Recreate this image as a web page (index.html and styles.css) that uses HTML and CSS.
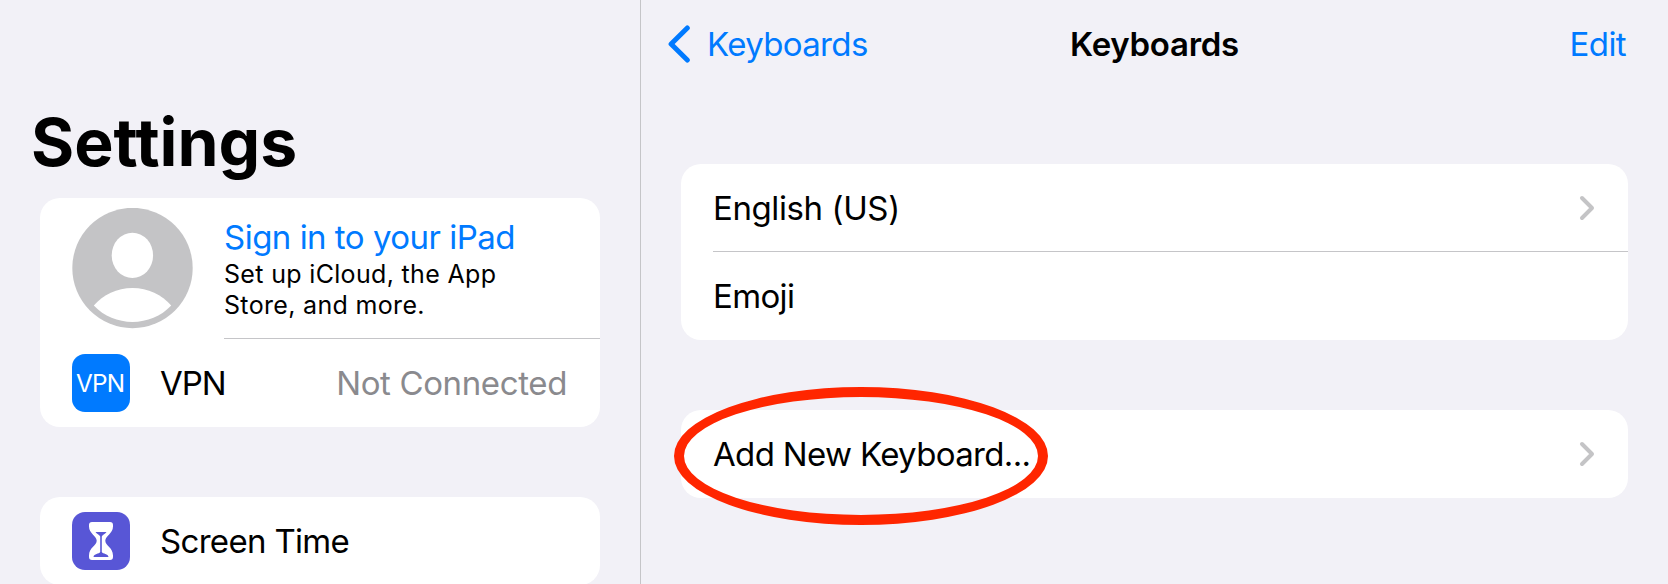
FILE: index.html
```html
<!DOCTYPE html>
<html lang="en">
<head>
<meta charset="utf-8">
<title>Settings – Keyboards</title>
<link rel="stylesheet" href="styles.css">
</head>
<body>
<div class="app">
  <aside class="sidebar">
    <h1 class="sidebar-title">Settings</h1>
    <section class="card">
      <div class="account">
        <svg class="avatar" width="121" height="121" viewBox="0 0 121 121">
          <circle cx="60.5" cy="60" r="60.2" fill="#c4c4c6"/>
          <ellipse cx="60.4" cy="47.4" rx="20.7" ry="22.7" fill="#fff"/>
          <path d="M21.8 97.6C31 86.500 45 80 60.500 80S90 86.500 99.200 97.600C89 108.500 75 114 60.500 114S32 108.500 21.800 97.600Z" fill="#fff"/>
        </svg>
        <div class="account-text">
          <div class="sign-in">Sign in to your iPad</div>
          <div class="account-note">Set up iCloud, the App<br>Store, and more.</div>
        </div>
      </div>
      <div class="row">
        <span class="icon icon-vpn">VPN</span>
        <span class="label label-vpn">VPN</span>
        <span class="status">Not Connected</span>
      </div>
    </section>
    <section class="card">
      <div class="row">
        <svg class="icon icon-time" width="58" height="58" viewBox="0 0 58 58">
          <path d="M20 10H38Q41 10 41 13V14.500C41 21.500 33.300 24 33.300 28.800C33.300 33.600 41 35.500 41 43.500V45Q41 48 38 48H20Q17 48 17 45V43.500C17 35.500 24.700 33.600 24.700 28.800C24.700 24 17 21.500 17 14.500V13Q17 10 20 10Z" fill="#fff"/>
          <path d="M23.500 20H34.500C33.500 22.200 30.500 22.300 29.800 24.500V40C31 42 36 41.500 36.500 45H21.500C22 41.500 27 42 28.200 40V24.500C27.500 22.300 24.500 22.200 23.500 20Z" fill="#5856d6"/>
        </svg>
        <span class="label label-time">Screen Time</span>
      </div>
    </section>
  </aside>
  <main class="detail">
    <header class="nav">
      <a class="back"><svg width="22" height="40" viewBox="0 0 22 40"><path d="M19.300 4L3.100 20L19.300 36" fill="none" stroke="#007aff" stroke-width="5" stroke-linecap="round" stroke-linejoin="round"/></svg><span>Keyboards</span></a>
      <h2 class="nav-title">Keyboards</h2>
      <a class="edit">Edit</a>
    </header>
    <section class="card list">
      <div class="item">
        <div class="item-body divided"><span class="english">English (US)</span>
          <svg class="chevron" width="16" height="26" viewBox="0 0 16 26"><path d="M3 3L13 13L3 23"/></svg></div>
      </div>
      <div class="item"><div class="item-body"><span class="emoji">Emoji</span></div></div>
    </section>
    <section class="card list add">
      <div class="item">
        <div class="item-body"><span class="add-label">Add New Keyboard...</span>
          <svg class="chevron" width="16" height="26" viewBox="0 0 16 26"><path d="M3 3L13 13L3 23"/></svg></div>
      </div>
      <div class="highlight"></div>
    </section>
  </main>
</div>
</body>
</html>
```
FILE: styles.css
```css
* { box-sizing: border-box; }
body {
  margin: 0;
  background: #f2f1f7;
  color: #000;
  font: 400 33px/40px Inter, "Liberation Sans", sans-serif;
  white-space: nowrap;
}
.app { display: flex; height: 584px; overflow: hidden; }
.sidebar {
  width: 641px;
  flex: none;
  padding: 102px 40px 0;
  border-right: 1px solid #c5c5c8;
}
.sidebar-title {
  margin: 0 0 16px -9px;
  font-size: 66px;
  line-height: 80px;
  font-weight: 700;
}
.card { background: #fff; border-radius: 20px; }
.sidebar .card + .card { margin-top: 70px; }

.account { display: flex; height: 141px; padding-left: 32px; }
.avatar { flex: none; margin: 10px 31px 0 0; }
.account-text { flex: 1; padding-top: 19px; border-bottom: 1px solid #c5c5c8; }
.sign-in { color: #007aff; letter-spacing: -0.51px; }
.account-note { margin-top: 2px; font-size: 25px; line-height: 31px; letter-spacing: 0.33px; }

.row { display: flex; align-items: center; height: 88px; padding: 0 33px 0 32px; }
.icon { flex: none; width: 58px; height: 58px; border-radius: 13px; margin-right: 30px; }
.icon-vpn {
  background: #007aff;
  color: #fff;
  font-size: 24.3px;
  line-height: 58px;
  letter-spacing: -0.8px;
  padding-left: 4px;
}
.icon-time { background: #5856d6; }
.label-vpn { letter-spacing: -1px; }
.label-time { letter-spacing: -0.68px; }
.status { margin-left: auto; color: #8a8a8e; letter-spacing: -0.37px; }

.detail { flex: 1; padding: 0 40px; }
.nav {
  display: grid;
  grid-template-columns: 1fr auto 1fr;
  align-items: center;
  height: 88px;
  margin: 0 2px 76px -13.500px;
  color: #007aff;
}
.back { display: flex; align-items: center; gap: 17.500px; letter-spacing: -0.65px; }
.nav-title {
  margin: 0 0 0 15.500px;
  font-size: 33px;
  font-weight: 600;
  letter-spacing: -0.29px;
  color: #000;
}
.edit { justify-self: end; letter-spacing: -0.6px; }
.list { position: relative; }
.list.add { margin-top: 70px; }
.item { height: 88px; padding-left: 32px; }
.item-body { display: flex; align-items: center; justify-content: space-between; height: 88px; padding-right: 33px; position: relative; }
.divided::after { content: ""; position: absolute; left: 0; right: 0; bottom: 0; height: 1px; background: #c5c5c8; }
.english { letter-spacing: -0.4px; }
.emoji { letter-spacing: -0.65px; }
.add-label { letter-spacing: -0.66px; }
.chevron path {
  fill: none;
  stroke: #c4c4c6;
  stroke-width: 4px;
  stroke-linecap: round;
  stroke-linejoin: round;
}
.highlight {
  position: absolute;
  left: -7px;
  top: -23px;
  width: 374px;
  height: 138px;
  border: 10px solid #ff2600;
  border-radius: 50%;
}
```
